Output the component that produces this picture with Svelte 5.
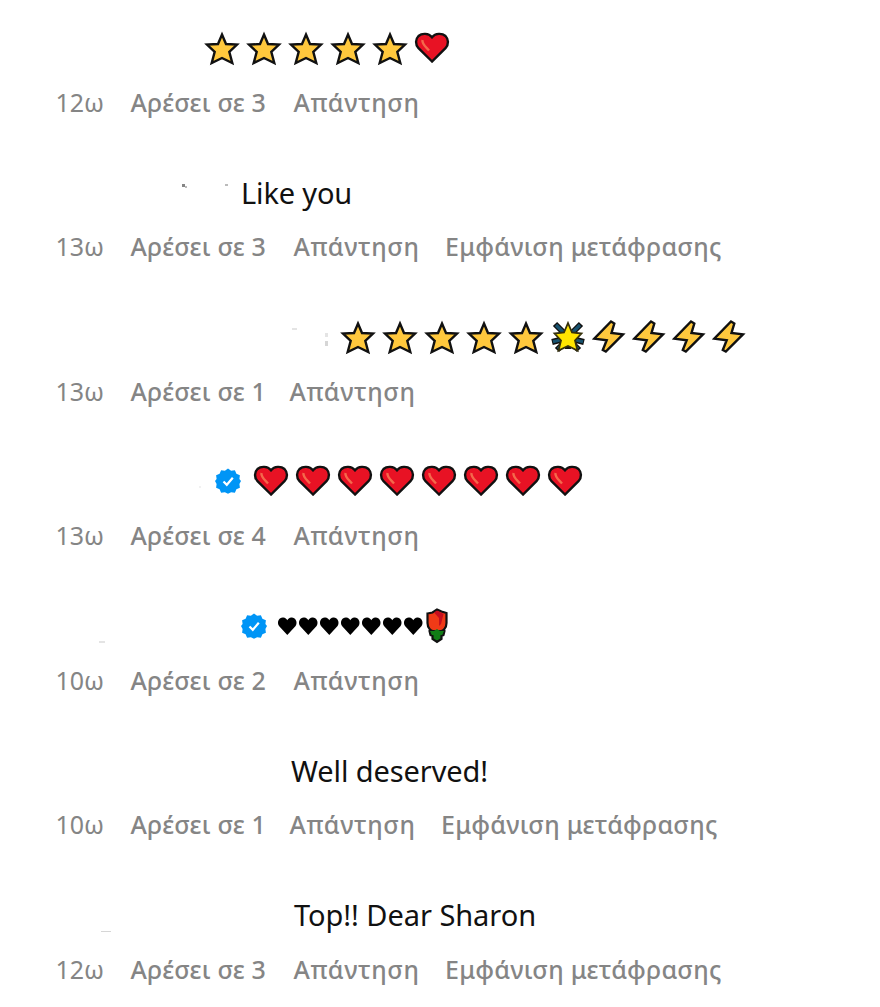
<script>
  const repeat = (name, n) => Array(n).fill(name);

  // indent leaves room for the hidden user name
  const comments = [
    { indent: 201, icons: [...repeat("star", 5), "heart"], age: "12ω", likes: 3 },
    {
      indent: 241,
      text: "Like you",
      spacing: -0.15,
      age: "13ω",
      likes: 3,
      translate: true,
      specks: [
        { x: 182, y: 184, w: 3, h: 3, c: "#666" },
        { x: 185, y: 186, w: 2, h: 2, c: "#aaa" },
        { x: 225, y: 184, w: 3, h: 2, c: "#aaa" }
      ]
    },
    {
      indent: 337,
      icons: [...repeat("star", 5), "glow", ...repeat("bolt", 4)],
      age: "13ω",
      likes: 1,
      specks: [
        { x: 292, y: 328, w: 5, h: 2, c: "#ddd" },
        { x: 325, y: 333, w: 3, h: 4, c: "#ddd" },
        { x: 325, y: 341, w: 3, h: 5, c: "#ccc" }
      ]
    },
    {
      indent: 215,
      verified: true,
      icons: repeat("heart", 8),
      age: "13ω",
      likes: 4,
      specks: [{ x: 199, y: 486, w: 2, h: 2, c: "#eee" }]
    },
    {
      indent: 241,
      verified: true,
      icons: [...repeat("suit", 7), "rose"],
      age: "10ω",
      likes: 2,
      specks: [{ x: 99, y: 641, w: 6, h: 2, c: "#ddd" }]
    },
    { indent: 291, text: "Well deserved!", spacing: -0.1, age: "10ω", likes: 1, translate: true },
    {
      indent: 294,
      text: "Top!! Dear Sharon",
      spacing: -0.05,
      age: "12ω",
      likes: 3,
      translate: true,
      specks: [{ x: 101, y: 931, w: 10, h: 1, c: "#ccc" }]
    }
  ];
</script>

<main>
  {#each comments as comment}
    <article class="comment">
      <div class="body" style="padding-left: {comment.indent}px">
        {#if comment.verified}
          <svg class="verified" viewBox="0 0 26 26">
            <path
              fill="#0095f6"
              d="M13 .5l3.1 2.3 3.8-.5 1.5 3.5 3.5 1.5-.5 3.8L26 13l-1.6 3 .5 3.7-3.5 1.5-1.5 3.5-3.8-.5L13 25.7l-3.1-1.5-3.8.5-1.5-3.5-3.5-1.5.5-3.7L0 13l1.6-1.9-.5-3.8 3.5-1.5 1.5-3.5 3.8.5z" />
            <path fill="none" stroke="#fff" stroke-width="2.2" d="M8.5 13.5l3.3 3.3 6-7" />
          </svg>
        {/if}
        {#if comment.text}
          <span class="text" style="letter-spacing: {comment.spacing}px">{comment.text}</span>
        {/if}
        {#each comment.icons || [] as icon}
          {#if icon === "star"}
            <svg class="emoji" viewBox="0 0 42 42">
              <path
                class="outline"
                fill="#ffc83d"
                d="M21 7.5L25 17L36 17.6L28.3 24.8L31.3 36L21 31L10.7 36L13.7 24.8L6 17.6L17 17Z" />
            </svg>
          {:else if icon === "heart"}
            <svg class="emoji" viewBox="0 0 42 42">
              <path
                class="outline"
                fill="#e81224"
                d="M21 34.5L7.5 21.2C4 17.5 4.5 12 7.5 9C11 6 17.5 6 21 10.3C24.5 6 31 6 34.5 9C37.5 12 38 17.5 34.5 21.2Z" />
              <path fill="none" stroke="#f4694b" stroke-width="2.4" d="M11.5 13C10.7 17 15 20 18 23.5" />
            </svg>
          {:else if icon === "glow"}
            <svg class="emoji" viewBox="0 0 42 42">
              <path
                class="rays"
                stroke="#111"
                stroke-width="6"
                d="M21 21L8 8M21 21L34 8M21 22L5 26M21 22L37 26M21 23L10 34M21 23L32 34M21 23V33" />
              <path
                class="rays"
                stroke="#17526f"
                stroke-width="3.2"
                d="M21 21L9 9M21 21L33 9M21 22L6 25.7M21 22L36 25.7M21 23L11 33M21 23L31 33" />
              <path
                fill="#ffe500"
                stroke="#35300b"
                stroke-width="1.8"
                d="M21 7L25 16.5L34.5 17.5L28 24.5L30.5 34.5L21 30L11.5 34.5L14 24.5L7.5 17.5L17 16.5Z" />
            </svg>
          {:else if icon === "bolt"}
            <svg class="emoji bolt" viewBox="0 0 40 42">
              <path
                class="outline"
                fill="#ffc83d"
                d="M22 5.5L25.3 7.5L22.5 17L34 18.3L16.8 35.5L13.8 34L17.7 24.3L5.3 22.7Z" />
            </svg>
          {:else if icon === "suit"}
            <svg class="emoji suit" viewBox="0 0 21 42">
              <path d="M11.3 30L3 21C.3 16.5 3.5 12 7.3 12.5C9.3 12.8 10.6 13.8 11.3 15.3C12 13.8 13.3 12.8 15.3 12.5C18.8 12 22.3 16.5 19.6 21Z" />
            </svg>
          {:else}
            <svg class="emoji rose" viewBox="0 0 24 42">
              <path
                fill="#117d16"
                stroke="#111"
                stroke-width="2.2"
                d="M6 23l-1.5 3 1 4 2 1v3l4.5 3 4.5-3v-3l2-1 1-4-1.5-3z" />
              <path
                fill="#f03a17"
                stroke="#111"
                stroke-width="2.2"
                d="M2.5 8.5L7.5 7.5L12 4.5L16.5 6.5L21.5 8V18C21.5 23 18 26 16 26H8C6 26 2.5 23 2.5 18Z" />
              <path fill="#c50f1f" d="M9 7.5L12 5.5L16 7.5L18.5 9L16 19L14 21L14 13Z" />
              <path fill="#117d16" d="M5 26l4 0 3-2 3 2 4 0-2 4H7z" />
            </svg>
          {/if}
        {/each}
      </div>
      <footer class="meta">
        <span class="age">{comment.age}</span>
        <span class="likes">Αρέσει σε {comment.likes}</span>
        <span class="reply" class:narrow={comment.likes === 1}>Απάντηση</span>
        {#if comment.translate}
          <span class="translate">Εμφάνιση μετάφρασης</span>
        {/if}
      </footer>
    </article>
    {#each comment.specks || [] as s}
      <i class="speck" style="left: {s.x}px; top: {s.y}px; width: {s.w}px; height: {s.h}px; background: {s.c}"></i>
    {/each}
  {/each}
</main>

<style>
  :global(body) {
    margin: 0;
    background: #fff;
  }

  main {
    position: relative;
    width: 880px;
    height: 1007px;
    overflow: hidden;
    font-family: "Noto Sans", "Open Sans", sans-serif;
  }

  .comment {
    height: 144.5px;
    white-space: nowrap;
  }

  .body {
    display: flex;
    align-items: center;
    box-sizing: border-box;
    height: 83.5px;
    padding-top: 12px;
  }

  .text {
    padding-top: 1px;
    font-size: 29px;
    line-height: 40px;
    color: #111;
  }

  .emoji {
    flex: none;
    width: 42px;
    height: 42px;
  }

  .bolt {
    width: 40px;
  }

  .suit {
    width: 21px;
    overflow: visible;
  }

  .rose {
    width: 24px;
    margin-left: 2px;
  }

  .verified {
    flex: none;
    width: 26px;
    height: 26px;
    margin-right: 9px;
  }

  .outline {
    stroke: #111;
    stroke-width: 2.4;
  }

  .rays {
    fill: none;
  }

  .meta {
    display: flex;
    padding-left: 55.5px;
    font-size: 25px;
    font-weight: 500;
    line-height: 36px;
    color: #858585;
  }

  .age {
    width: 75px;
    font-weight: 400;
  }

  .likes {
    width: 163px;
    letter-spacing: 0.17px;
  }

  .reply {
    width: 151.5px;
    letter-spacing: 0.6px;
  }

  .narrow {
    margin-left: -4px;
  }

  .translate {
    letter-spacing: 0.27px;
  }

  .speck {
    position: absolute;
    opacity: 0.8;
  }
</style>
